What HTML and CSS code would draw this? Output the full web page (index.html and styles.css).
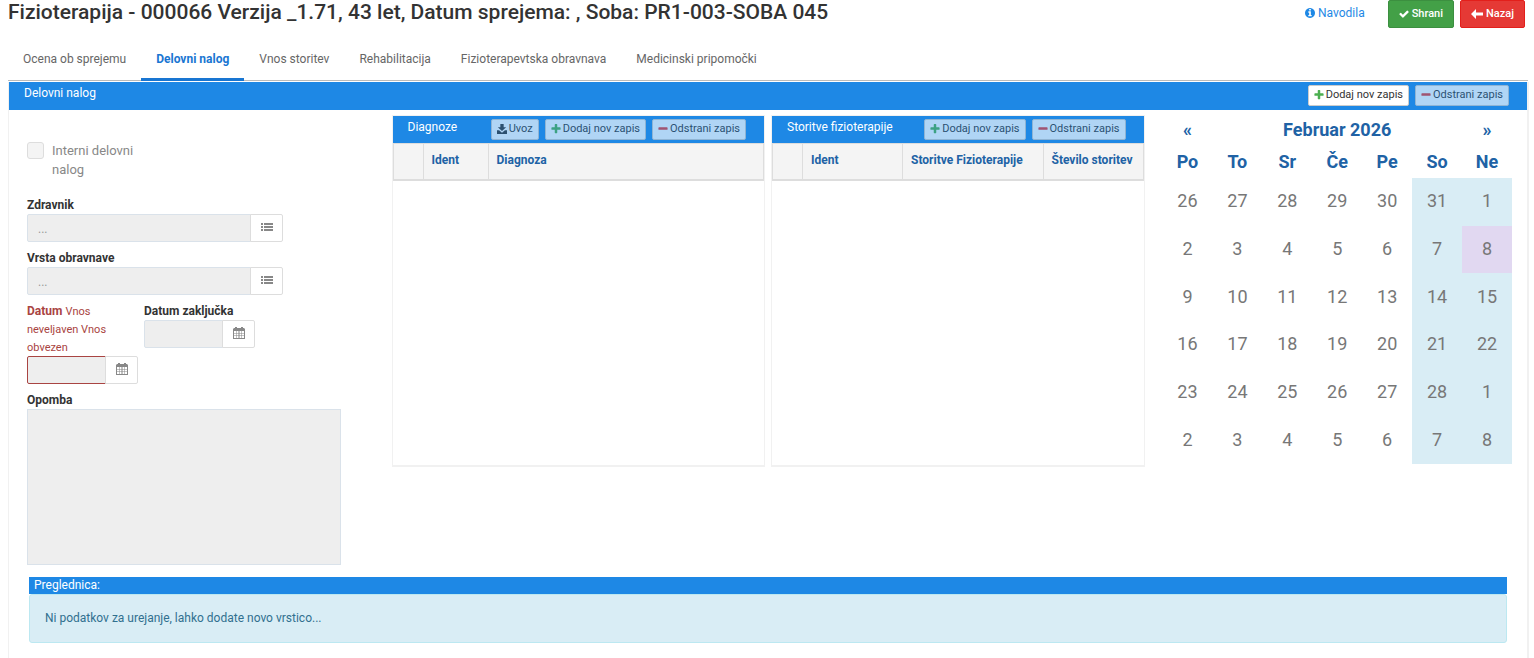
FILE: index.html
```
<!DOCTYPE html>
<html lang="sl">
<head>
    <meta charset="UTF-8">
    <meta name="viewport" content="width=device-width, initial-scale=1.0">
    <title>Fizioterapija</title>
    <link rel="stylesheet" href="styles.css">
</head>
<body>
    <!-- Shared icons -->
    <svg class="sprite" aria-hidden="true">
        <symbol id="plus" viewBox="128 128 1536 1536"><path d="M1600 736v192q0 40-28 68t-68 28h-416v416q0 40-28 68t-68 28h-192q-40 0-68-28t-28-68v-416h-416q-40 0-68-28t-28-68v-192q0-40 28-68t68-28h416v-416q0-40 28-68t68-28h192q40 0 68 28t28 68v416h416q40 0 68 28t28 68z"/></symbol>
        <symbol id="minus" viewBox="128 128 1536 1536"><path d="M1600 736v192q0 40-28 68t-68 28h-1216q-40 0-68-28t-28-68v-192q0-40 28-68t68-28h1216q40 0 68 28t28 68z"/></symbol>
        <symbol id="check" viewBox="64 64 1664 1664"><path d="M1671 566q0 40-28 68l-724 724-136 136q-28 28-68 28t-68-28l-136-136-362-362q-28-28-28-68t28-68l136-136q28-28 68-28t68 28l294 295 656-657q28-28 68-28t68 28l136 136q28 28 28 68z"/></symbol>
        <symbol id="info" viewBox="128 128 1536 1536"><path d="M1152 1376v-160q0-14-9-23t-23-9h-96v-512q0-14-9-23t-23-9h-320q-14 0-23 9t-9 23v160q0 14 9 23t23 9h96v320h-96q-14 0-23 9t-9 23v160q0 14 9 23t23 9h448q14 0 23-9t9-23zm-128-896v-160q0-14-9-23t-23-9h-192q-14 0-23 9t-9 23v160q0 14 9 23t23 9h192q14 0 23-9t9-23zm640 416q0 209-103 385.5t-279.5 279.5-385.5 103-385.5-103-279.5-279.5-103-385.5 103-385.5 279.5-279.5 385.5-103 385.5 103 279.5 279.5 103 385.5z"/></symbol>
        <symbol id="arrow" viewBox="0 0 12 12"><path d="M0 6l5-5v3.500h7v3H5V11z"/></symbol>
        <symbol id="import" viewBox="0 0 12 12"><path d="M4 0h4v4h3L6 8.500 1 4h3zM0 7.500h2.500L6 10.500l3.500-3H12V12H0z"/></symbol>
        <symbol id="list" viewBox="0 0 12 12"><path d="M0 2h2v2H0zM3 2h9v2H3zM0 5h2v2H0zM3 5h9v2H3zM0 8h2v2H0zM3 8h9v2H3z"/></symbol>
        <symbol id="calendar" viewBox="0 0 12 12"><path fill-rule="evenodd" d="M1 1h1V0h2v1h4V0h2v1h1l1 1v10H0V2zM1 4v2h2V4zm2.500 0v2h2V4zm3 0v2h2V4zm2.500 0v2h2V4zM1 6.500v2h2v-2zm2.500 0v2h2v-2zm3 0v2h2v-2zm2.500 0v2h2v-2zM1 9v2h2V9zm2.500 0v2h2V9zm3 0v2h2V9zm2.500 0v2h2V9z"/></symbol>
    </svg>

    <header class="page-header">
        <h1>Fizioterapija - 000066 Verzija _1.71, 43 let, Datum sprejema: , Soba: PR1-003-SOBA 045</h1>
        <div class="page-actions">
            <a href="#" class="help"><svg class="icon"><use href="#info"/></svg>Navodila</a>
            <button class="btn btn-save"><svg class="icon"><use href="#check"/></svg>Shrani</button>
            <button class="btn btn-back"><svg class="icon icon-lg"><use href="#arrow"/></svg>Nazaj</button>
        </div>
    </header>

    <nav class="tabs">
        <a href="#">Ocena ob sprejemu</a>
        <a href="#" class="active">Delovni nalog</a>
        <a href="#">Vnos storitev</a>
        <a href="#">Rehabilitacija</a>
        <a href="#">Fizioterapevtska obravnava</a>
        <a href="#">Medicinski pripomočki</a>
    </nav>

    <main class="panel">
        <div class="panel-head">
            <h2>Delovni nalog</h2>
            <button class="btn-xs"><svg class="icon add"><use href="#plus"/></svg>Dodaj nov zapis</button>
            <button class="btn-xs" disabled><svg class="icon remove"><use href="#minus"/></svg>Odstrani zapis</button>
        </div>

        <div class="columns">
            <form class="order-form">
                <label class="check-row">
                    <input type="checkbox" disabled>
                    <span>Interni delovni nalog</span>
                </label>

                <div class="field">
                    <label for="doctor">Zdravnik</label>
                    <div class="input-group">
                        <input type="text" id="doctor" placeholder="..." disabled>
                        <button type="button" aria-label="Izberi zdravnika"><svg class="icon icon-lg"><use href="#list"/></svg></button>
                    </div>
                </div>

                <div class="field">
                    <label for="type">Vrsta obravnave</label>
                    <div class="input-group">
                        <input type="text" id="type" placeholder="..." disabled>
                        <button type="button" aria-label="Izberi vrsto"><svg class="icon icon-lg"><use href="#list"/></svg></button>
                    </div>
                </div>

                <div class="dates">
                    <div class="field has-error">
                        <label for="date">Datum <small>Vnos neveljaven Vnos obvezen</small></label>
                        <div class="input-group">
                            <input type="text" id="date" disabled>
                            <button type="button" aria-label="Izberi datum"><svg class="icon icon-lg"><use href="#calendar"/></svg></button>
                        </div>
                    </div>
                    <div class="field">
                        <label for="date-end">Datum zaključka</label>
                        <div class="input-group">
                            <input type="text" id="date-end" disabled>
                            <button type="button" aria-label="Izberi datum zaključka"><svg class="icon icon-lg"><use href="#calendar"/></svg></button>
                        </div>
                    </div>
                </div>

                <div class="field note">
                    <label for="note">Opomba</label>
                    <textarea id="note" disabled></textarea>
                </div>
            </form>

            <section class="subpanel">
                <div class="panel-head">
                    <h2>Diagnoze</h2>
                    <button class="btn-xs" disabled><svg class="icon"><use href="#import"/></svg>Uvoz</button>
                    <button class="btn-xs" disabled><svg class="icon add"><use href="#plus"/></svg>Dodaj nov zapis</button>
                    <button class="btn-xs" disabled><svg class="icon remove"><use href="#minus"/></svg>Odstrani zapis</button>
                </div>
                <table class="grid">
                    <colgroup>
                        <col class="col-select">
                        <col class="col-ident">
                        <col>
                    </colgroup>
                    <thead>
                        <tr><th></th><th>Ident</th><th>Diagnoza</th></tr>
                    </thead>
                </table>
            </section>

            <section class="subpanel">
                <div class="panel-head">
                    <h2>Storitve fizioterapije</h2>
                    <button class="btn-xs" disabled><svg class="icon add"><use href="#plus"/></svg>Dodaj nov zapis</button>
                    <button class="btn-xs" disabled><svg class="icon remove"><use href="#minus"/></svg>Odstrani zapis</button>
                </div>
                <table class="grid">
                    <colgroup>
                        <col class="col-select">
                        <col class="col-code">
                        <col>
                        <col class="col-count">
                    </colgroup>
                    <thead>
                        <tr><th></th><th>Ident</th><th>Storitve Fizioterapije</th><th>Število storitev</th></tr>
                    </thead>
                </table>
            </section>

            <div class="calendar">
                <table>
                    <thead>
                        <tr><th>«</th><th colspan="5">Februar 2026</th><th>»</th></tr>
                        <tr><th>Po</th><th>To</th><th>Sr</th><th>Če</th><th>Pe</th><th>So</th><th>Ne</th></tr>
                    </thead>
                    <tbody>
                        <tr><td>26</td><td>27</td><td>28</td><td>29</td><td>30</td><td>31</td><td>1</td></tr>
                        <tr><td>2</td><td>3</td><td>4</td><td>5</td><td>6</td><td>7</td><td class="today">8</td></tr>
                        <tr><td>9</td><td>10</td><td>11</td><td>12</td><td>13</td><td>14</td><td>15</td></tr>
                        <tr><td>16</td><td>17</td><td>18</td><td>19</td><td>20</td><td>21</td><td>22</td></tr>
                        <tr><td>23</td><td>24</td><td>25</td><td>26</td><td>27</td><td>28</td><td>1</td></tr>
                        <tr><td>2</td><td>3</td><td>4</td><td>5</td><td>6</td><td>7</td><td>8</td></tr>
                    </tbody>
                </table>
            </div>
        </div>

        <section class="overview">
            <h2>Preglednica:</h2>
            <p class="alert">Ni podatkov za urejanje, lahko dodate novo vrstico...</p>
        </section>
    </main>
</body>
</html>
```
FILE: styles.css
```
:root {
    --blue: #1e88e5;
    --heading: #2062a5;
    --info: #d9edf5;
    --line: #dddddd;
}

* {
    box-sizing: border-box;
    margin: 0;
    padding: 0;
}

body {
    font-family: Roboto, "Liberation Sans", sans-serif;
    font-size: 12px;
    line-height: 18px;
    color: #333;
    background-color: #fff;
    min-height: 100vh;
    display: flex;
    flex-direction: column;
    padding: 0 5px 0 8px;
}

button,
input,
textarea {
    font: inherit;
}

.sprite {
    position: absolute;
    width: 0;
    height: 0;
}

.icon {
    width: 10px;
    height: 10px;
    fill: currentColor;
    flex: none;
}

.icon-lg {
    width: 12px;
    height: 12px;
}

/* Header */
.page-header {
    display: flex;
    justify-content: space-between;
    align-items: flex-start;
    padding-right: 4px;
}

h1 {
    font-size: 21px;
    line-height: 24px;
    font-weight: 500;
}

.page-actions {
    display: flex;
    align-items: center;
    gap: 6px;
}

.help {
    display: flex;
    align-items: center;
    gap: 3px;
    margin: 0 17px 2px 0;
    color: var(--blue);
    text-decoration: none;
}

.btn {
    display: flex;
    align-items: center;
    gap: 3px;
    height: 28px;
    padding: 0 10px 1px;
    border: 1px solid;
    border-radius: 2px;
    font-size: 11px;
    font-weight: 500;
    color: #fff;
}

.btn-save {
    background-color: #43a047;
    border-color: #3c8f40;
}

.btn-back {
    background-color: #e53935;
    border-color: #e31f1b;
}

/* Tabs */
.tabs {
    display: flex;
    margin: 10px 1px 1px 0;
    border-bottom: 1px solid #bbb;
}

.tabs a {
    padding: 12px 15px 10px;
    border-bottom: 3px solid transparent;
    margin-bottom: -1px;
    color: #666;
    text-decoration: none;
}

.tabs .active {
    color: #1976d2;
    font-weight: bold;
    border-bottom-color: #1976d2;
}

/* Panels */
.panel {
    flex: 1;
    border: solid #f1f1f1;
    border-width: 0 2px 0 1px;
}

.panel-head {
    display: flex;
    align-items: flex-start;
    gap: 6px;
    height: 28px;
    padding: 3px 18px 0 15px;
    background-color: var(--blue);
}

.panel-head h2 {
    flex: 1;
    font-size: 12px;
    line-height: 16px;
    font-weight: 400;
    color: #fff;
    white-space: nowrap;
}

.btn-xs {
    display: flex;
    align-items: center;
    gap: 2px;
    height: 21px;
    padding: 0 5px 2px;
    border: 1px solid #ccc;
    border-radius: 2px;
    background-color: #fff;
    font-size: 11px;
    color: #333;
    white-space: nowrap;
}

.btn-xs:disabled {
    opacity: 0.65;
}

.add {
    color: #4caf50;
}

.remove {
    color: #e53935;
}

.columns {
    display: grid;
    grid-template-columns: repeat(4, 1fr);
}

.subpanel {
    height: 352px;
    margin: 5px 3px 0;
    border: 1px solid #f1f1f1;
    border-bottom-width: 2px;
}

.subpanel .panel-head {
    height: 27px;
}

.grid {
    width: 100%;
    table-layout: fixed;
    border-collapse: collapse;
}

.grid th {
    height: 36px;
    padding: 0 8px 2px;
    border: 1px solid var(--line);
    border-bottom-width: 2px;
    background-color: #f4f4f4;
    color: var(--heading);
    text-align: left;
    white-space: nowrap;
}

.col-select {
    width: 30px;
}

.col-ident {
    width: 65px;
}

.col-code {
    width: 100px;
}

.col-count {
    width: 100px;
}

/* Work order form */
.order-form {
    padding: 31px 48px 0 18px;
}

.check-row {
    display: flex;
    gap: 8px;
    width: 120px;
    margin-bottom: 17px;
    font-size: 13px;
    line-height: 19px;
    color: #888;
}

.check-row input {
    appearance: none;
    flex: none;
    width: 17px;
    height: 17px;
    margin-top: 1px;
    border: 1px solid var(--line);
    border-radius: 3px;
    background-color: #f4f4f4;
}

.field {
    margin-bottom: 7px;
}

.field label {
    display: block;
    font-weight: bold;
}

.field small {
    font-size: 11px;
    line-height: 16px;
    font-weight: normal;
}

.input-group {
    display: flex;
    max-width: 256px;
}

.input-group input {
    flex: 1;
    min-width: 0;
    height: 28px;
    padding: 2px 10px 0;
    border: 1px solid #dae2ea;
    border-radius: 2px 0 0 2px;
    background-color: #eee;
}

.input-group input::placeholder {
    color: #999;
}

.input-group button {
    display: flex;
    align-items: center;
    justify-content: center;
    width: 33px;
    height: 28px;
    padding-bottom: 2px;
    margin-left: -1px;
    border: 1px solid var(--line);
    border-radius: 0 2px 2px 0;
    background-color: #fff;
    color: #888;
}

.dates {
    display: flex;
    align-items: flex-start;
    gap: 6px;
}

.dates .field {
    width: 111px;
}

.has-error label {
    color: #a94442;
}

.has-error .input-group input {
    border-color: #a94442;
}

.note {
    margin-bottom: 12px;
}

textarea {
    display: block;
    width: 100%;
    height: 156px;
    border: 1px solid #dae2ea;
    background-color: #eee;
    resize: none;
}

/* Calendar */
.calendar {
    padding: 4px 15px 0;
}

.calendar table {
    width: 100%;
    height: 350px;
    table-layout: fixed;
    border-collapse: collapse;
    font-size: 18px;
    line-height: 24px;
    text-align: center;
}

.calendar th {
    height: 32px;
    color: var(--heading);
}

.calendar td {
    padding-bottom: 1px;
    color: #777;
}

.calendar td:nth-child(n+6) {
    background-color: var(--info);
}

.calendar td.today {
    background-color: #e1d8f1;
}

/* Overview */
.overview {
    margin: 0 20px 15px;
}

.overview h2 {
    padding-left: 5px;
    font-size: 12px;
    line-height: 17px;
    font-weight: 400;
    color: #fff;
    background-color: var(--blue);
}

.alert {
    padding: 14px 15px 15px;
    border: 1px solid #bce8f1;
    border-radius: 3px;
    background-color: var(--info);
    color: #31708f;
}
```
